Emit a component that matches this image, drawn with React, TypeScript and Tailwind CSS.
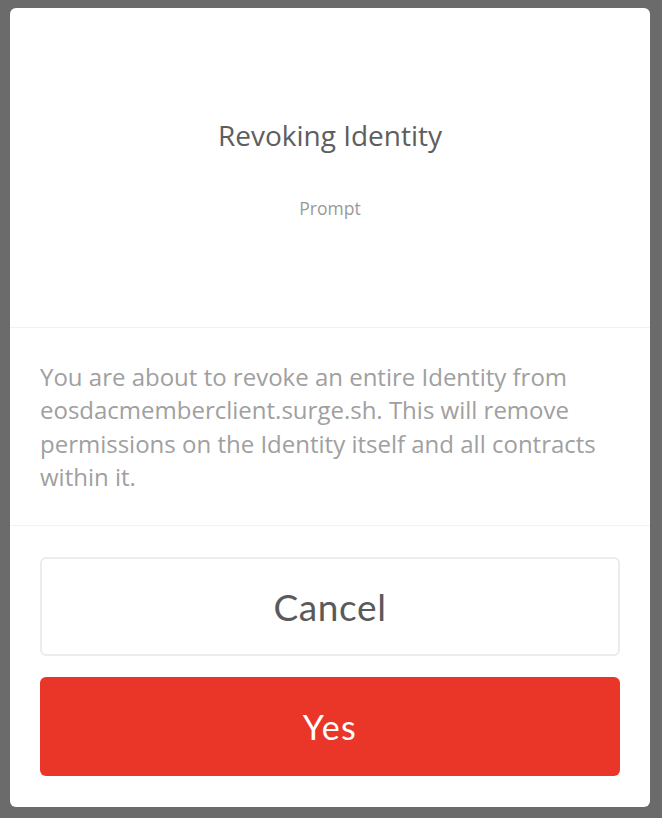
export default function App() {
  return (
    <div className="w-[662px] h-[818px] bg-[#6b6b6b] pt-2 px-[10px] font-['Open_Sans',sans-serif]">
      <div className="w-[640px] h-[799px] bg-white rounded-[6px] flex flex-col">
        {/* Header */}
        <div className="h-[320px] flex flex-col items-center pt-[108px] border-b border-[#f2f2f2]">
          <h1 className="text-[28px] leading-[38px] text-[#5e5e5e]">Revoking Identity</h1>
          <p className="mt-[42px] text-[17.5px] leading-[24px] text-[#9a9a9a]">Prompt</p>
        </div>

        {/* Message */}
        <div className="h-[198px] px-[30px] flex items-center border-b border-[#f2f2f2]">
          <p className="text-[24px] leading-[33.5px] text-[#a0a0a0]">
            You are about to revoke an entire Identity from eosdacmemberclient.surge.sh. This will remove
            permissions on the Identity itself and all contracts within it.
          </p>
        </div>

        {/* Actions */}
        <div className="flex flex-col gap-[21px] px-[30px] pt-[31px] font-['Lato',sans-serif]">
          <button className="h-[99px] rounded-[6px] border-2 border-[#ececec] bg-white text-[37px] tracking-[0.6px] text-[#5a5a5a]">
            Cancel
          </button>
          <button className="h-[99px] rounded-[6px] bg-[#e93628] text-[34px] tracking-[1.5px] text-white">
            Yes
          </button>
        </div>
      </div>
    </div>
  );
}
